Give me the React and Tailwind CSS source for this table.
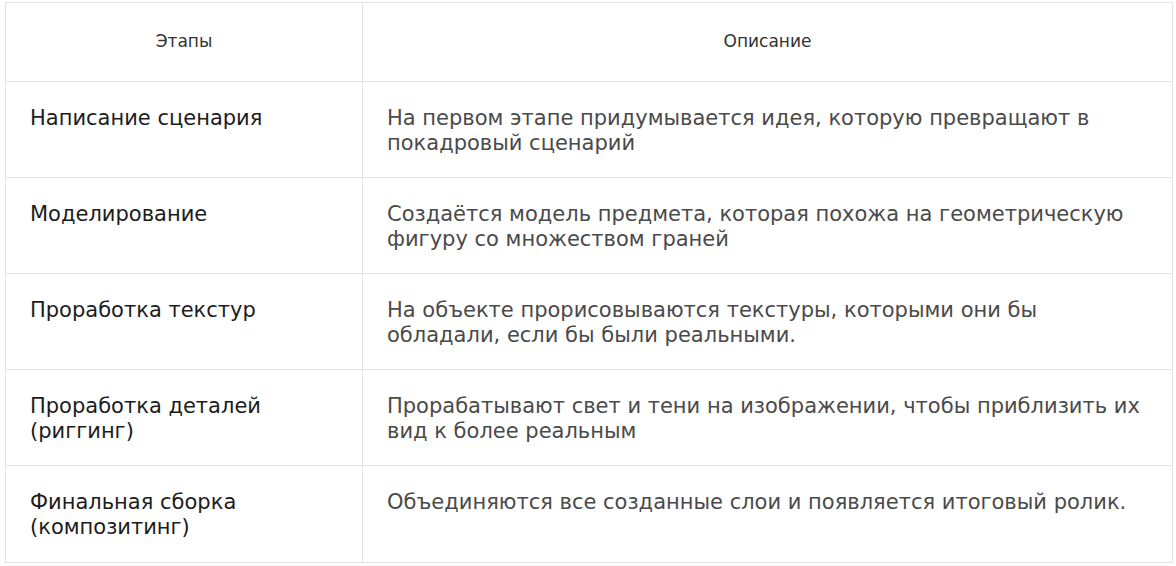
import React from 'react';

const stages = [
  {
    name: 'Написание сценария',
    text: 'На первом этапе придумывается идея, которую превращают в покадровый сценарий',
  },
  {
    name: 'Моделирование',
    text: 'Создаётся модель предмета, которая похожа на геометрическую фигуру со множеством граней',
  },
  {
    name: 'Проработка текстур',
    text: 'На объекте прорисовываются текстуры, которыми они бы обладали, если бы были реальными.',
  },
  {
    name: 'Проработка деталей (риггинг)',
    text: 'Прорабатывают свет и тени на изображении, чтобы приблизить их вид к более реальным',
  },
  {
    name: 'Финальная сборка (композитинг)',
    text: 'Объединяются все созданные слои и появляется итоговый ролик.',
  },
];

export default function App() {
  return (
    <div className="min-h-[566px] w-[1176px] bg-white pl-[5px] pt-[2px]" style={{ fontFamily: '"DejaVu Sans", sans-serif' }}>
      <div className="grid w-[1168px] grid-cols-[357px_1fr] border border-[#e3e3e3]">
        {/* header */}
        <div className="flex h-[79px] items-center justify-center border-r border-b border-[#e3e3e3] text-[17px] text-[#333]">
          Этапы
        </div>
        <div className="flex h-[79px] items-center justify-center border-b border-[#e3e3e3] text-[17px] text-[#333]">
          Описание
        </div>

        {stages.map((s, i) => {
          const last = i === stages.length - 1;
          return (
            <React.Fragment key={s.name}>
              <div
                className={`h-[96px] border-r border-[#e3e3e3] pl-[24px] pr-[40px] pt-[24px] text-[21px] leading-[25px] text-[#1c1c1c] ${last ? 'border-b-0' : 'border-b'}`}
              >
                {s.name}
              </div>
              <div
                className={`h-[96px] border-[#e3e3e3] pl-[24px] pr-[24px] pt-[24px] text-[21px] leading-[25px] text-[#4a4a4a] ${last ? 'border-b-0' : 'border-b'}`}
              >
                {s.text}
              </div>
            </React.Fragment>
          );
        })}
      </div>
    </div>
  );
}
